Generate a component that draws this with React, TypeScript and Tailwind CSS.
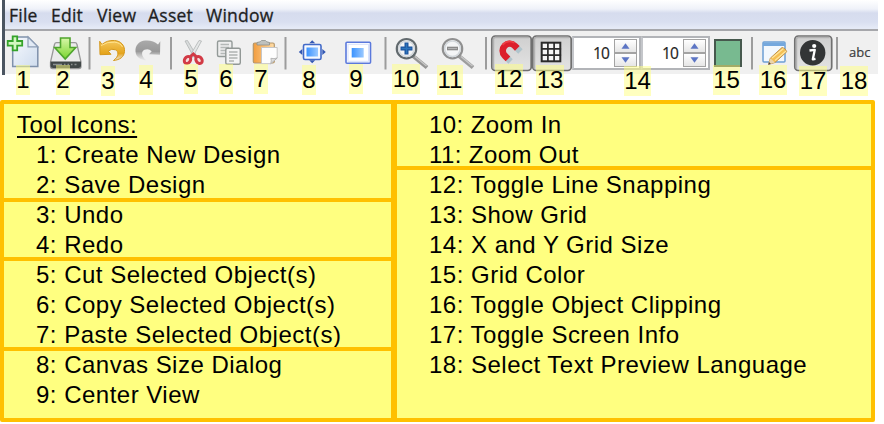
import type { ReactNode } from "react";

const menus = [
  { label: "File", cls: "w-[42px]" },
  { label: "Edit", cls: "w-[46px]" },
  { label: "View", cls: "w-[51px]" },
  { label: "Asset", cls: "w-[58px]" },
  { label: "Window", cls: "w-[80px]" },
];

/* Each tool draws in toolbar coordinates: x is its left edge, y starts at 31. */
function Tool({ x, w, children }: { x: number; w: number; children?: ReactNode }) {
  return (
    <svg className="block shrink-0" width={w} height={43} viewBox={`${x} 31 ${w} 43`}>
      {children}
    </svg>
  );
}

function Separator({ x, w }: { x: number; w: number }) {
  return (
    <Tool x={x} w={w}>
      <rect x={x + w / 2 - 1} y="37" width="2" height="32.5" fill="#9c9c9c" />
    </Tool>
  );
}

function Pressed({ x, w = 39 }: { x: number; w?: number }) {
  return (
    <>
      <rect x={x + 0.8} y="36" width={w - 1.6} height="34.5" rx="3.5" fill="url(#pressed)" stroke="#707070" strokeWidth="1.7" />
      <path d={`M${x + 2.5} 69V39.5q0-2 2-2H${x + w - 3}`} fill="none" stroke="#b2b2b2" strokeWidth="1.5" />
    </>
  );
}

function SpinButton({ up }: { up?: boolean }) {
  return (
    <div className="flex h-[14px] w-[23px] items-center justify-center border border-[#a3a3a3] bg-gradient-to-b from-white to-[#e6e6e6]">
      <svg width="9" height="6" viewBox="0 0 9 6">
        <path d={up ? "M0.5 5.7 4.5 0.3 8.5 5.7Z" : "M0.5 0.3 4.5 5.7 8.5 0.3Z"} fill="#5c75c4" />
      </svg>
    </div>
  );
}

function Spinner() {
  return (
    <div className="mt-[5px] flex h-[34px] w-[69px] shrink-0 items-start justify-end border-2 border-[#b2b4b8] border-l-[#c4c6ca] bg-white pr-[2px] pt-px">
      <span className="mr-[5px] mt-[4px] text-[15.5px] leading-[20px] tracking-[-0.9px] text-[#222] [-webkit-text-stroke:0.2px]">10</span>
      <div className="flex flex-col">
        <SpinButton up />
        <SpinButton />
      </div>
    </div>
  );
}

function Magnifier({ x, color, handle, children }: { x: number; color: string; handle: string; children: ReactNode }) {
  return (
    <g transform={`translate(${x} 0)`}>
      <path d="M18 56 32 67.5" stroke={handle} strokeWidth="4" />
      <path d="M20 56.5 31.5 66" stroke="#c8c8c8" strokeWidth="1.3" />
      <circle cx="11.5" cy="48.7" r="9.7" fill="#f4f5f6" stroke={color} strokeWidth="2.2" />
      <circle cx="11.5" cy="48.7" r="7.8" fill="none" stroke="#d3d8dc" strokeWidth="1.5" />
      {children}
    </g>
  );
}

function Toolbar() {
  return (
    <div className="flex h-[43px] bg-[#f0f0f0]">
      <Tool x={5} w={39}>
        <defs>
          <linearGradient id="pressed" x2="0" y2="1"><stop stopColor="#cfcfcf" /><stop offset="1" stopColor="#e3e3e3" /></linearGradient>
          <linearGradient id="paper" x2="1" y2="1"><stop stopColor="#f6f9fd" /><stop offset="1" stopColor="#cfdcee" /></linearGradient>
          <linearGradient id="green" x2="0" y2="1"><stop stopColor="#d8f7a8" /><stop offset="1" stopColor="#79d52d" /></linearGradient>
          <linearGradient id="gold" x2="0" y2="1"><stop stopColor="#f5c85d" /><stop offset=".65" stopColor="#e5a51d" /><stop offset="1" stopColor="#e5b75a" stopOpacity=".2" /></linearGradient>
          <linearGradient id="gray" x2="0" y2="1"><stop stopColor="#aaa" /><stop offset=".55" stopColor="#999" /><stop offset="1" stopColor="#bbb" stopOpacity=".1" /></linearGradient>
          <linearGradient id="blue" x2="1" y2="0"><stop stopColor="#3b93ff" /><stop offset="1" stopColor="#9bc9ff" /></linearGradient>
          <linearGradient id="board" x2="1" y2="0"><stop stopColor="#f29d3e" /><stop offset="1" stopColor="#ffdda8" /></linearGradient>
        </defs>
        <path d="M12.7 37H28l9.8 9.8V66.5H12.7Z" fill="url(#paper)" stroke="#7f91ab" strokeWidth="1.5" />
        <path d="M28 37v9.8h9.8Z" fill="#e2eaf5" stroke="#8c9db5" strokeWidth="1.2" />
        <path d="M12.7 36.3h4.5V41h5v4.6h-5v4.8h-4.5v-4.8h-5V41h5Z" fill="#d4f7c0" stroke="#35a32b" strokeWidth="1.8" />
      </Tool>
      <Tool x={44} w={40}>
        <path d="m54.5 44.5-4 17.5v4.5q0 2 2 2h26.5q2 0 2-2V62l-4-17.5q-.5-1.8-2-1.8H56.500q-1.500 0-2 1.800Z" fill="#ebebeb" stroke="#999" strokeWidth="1.3" />
        <path d="M50.500 61.500h30.500v4q0 2.500-2.500 2.500H53q-2.500 0-2.500-2.500Z" fill="#414747" />
        <path d="M53 64.500h9m2 0h1.500m2 0h1.500m2 0h1.500m2 0h2" stroke="#8b9090" strokeWidth="1.4" />
        <path d="M60.500 38h9.500v9.500h5.700L65.200 59 54.700 47.500h5.800Z" fill="url(#green)" stroke="#4fa52d" strokeWidth="1.6" />
      </Tool>
      <Separator x={84} w={11} />
      <Tool x={95} w={36}>
        <path d="M99.700 41.300 102 44.500Q107 40 114.500 40.500C121 41 125 45.500 124.500 51.500 124 57 120 59.800 113.500 60.500 119 56.500 119 51.500 115.500 49.800Q111.500 48 108.300 51.200L111 54.300 100 54.700Z" fill="url(#gold)" stroke="#d5981c" strokeWidth="1" />
        <path d="M101 45.500Q107.500 41.500 114.500 42.200 120 42.500 122.500 47" fill="none" stroke="#ffe28c" strokeWidth="1" />
      </Tool>
      <Tool x={131} w={35}>
        <path d="M160.300 41.300 158 44.500Q153 40 145.500 40.500C139 41 135 45.500 135.500 51.500 136 57 140 59.800 146.500 60.500 141 56.500 141 51.500 144.500 49.800Q148.500 48 151.700 51.200L149 54.300 160 54.700Z" fill="url(#gray)" />
      </Tool>
      <Separator x={166} w={10} />
      <Tool x={176} w={35}>
        <path d="m185 41 2.500-.5 9.500 16-3 1Z" fill="#d9dcdc" stroke="#b0b4b4" strokeWidth=".8" />
        <path d="m201.500 41-2.500-.5-9.500 16 3 1Z" fill="#e5e7e7" stroke="#b0b4b4" strokeWidth=".8" />
        <ellipse cx="187.500" cy="60" rx="2.900" ry="3.800" transform="rotate(35 187.500 60)" fill="#f6dede" stroke="#d23a45" strokeWidth="3" />
        <ellipse cx="199" cy="60" rx="2.900" ry="3.800" transform="rotate(-35 199 60)" fill="#f6dede" stroke="#d23a45" strokeWidth="3" />
        <path d="m190 57 3.300-3 3.300 3" fill="none" stroke="#d23a45" strokeWidth="3" />
      </Tool>
      <Tool x={211} w={35}>
        <rect x="217.500" y="41" width="14.500" height="15.500" rx="1.500" fill="#eee" stroke="#939a98" strokeWidth="1.400" />
        <path d="M220.500 44.500h8.500m-8.500 3h8.500m-8.500 3h8.500m-8.500 3h6" stroke="#b4b8b7" strokeWidth="1.300" />
        <rect x="225.800" y="48.300" width="14.500" height="16" rx="1.500" fill="#f4f4f4" stroke="#929896" strokeWidth="1.400" />
        <path d="M229 52h8.500m-8.500 3h8.500m-8.500 3h8.500m-8.500 3h5" stroke="#aeb2b1" strokeWidth="1.300" />
      </Tool>
      <Tool x={246} w={35}>
        <rect x="253.300" y="43" width="21" height="20" rx="1.500" fill="url(#board)" stroke="#b5976a" strokeWidth="1.200" />
        <path d="M257 45v-2.500q4-.5 4.500-2h4q.5 1.500 4 2V45Z" fill="#bfc1bd" stroke="#8d918c" strokeWidth=".8" />
        <path d="M261.500 47.500h15.700V58l-6.500 5.700h-9.200Z" fill="#fdfdfd" stroke="#c6c6c6" />
        <path d="M270.700 63.700q1-3 .2-5.400 3 .8 6.300-.3Z" fill="#ddd" stroke="#aaa" strokeWidth=".8" />
      </Tool>
      <Separator x={281} w={9} />
      <Tool x={290} w={46}>
        <rect x="303.500" y="44.500" width="17.500" height="15" rx="1.500" fill="#f7faff" stroke="#426ac8" strokeWidth="1.600" />
        <rect x="306.500" y="47.500" width="11.500" height="9" fill="url(#blue)" />
        <path d="m312.200 40.300 3 3h-6Zm0 23 3-3h-6Zm-13.400-11.300 3.500-3v6Zm27 0-3.500-3v6Z" fill="#3559b3" />
      </Tool>
      <Tool x={336} w={45}>
        <rect x="346" y="42.300" width="24.500" height="21" rx="1" fill="white" stroke="#5b79dc" strokeWidth="1.600" />
        <rect x="348" y="44.300" width="20.500" height="17" fill="none" stroke="#d8e2fc" />
        <rect x="351.700" y="48" width="12" height="9.500" fill="url(#blue)" />
      </Tool>
      <Separator x={381} w={9} />
      <Tool x={390} w={46}>
        <Magnifier x={395} color="#626a6e" handle="#949494">
          <path d="M11.500 42.500v12M5.500 48.500h12" stroke="#1c559e" strokeWidth="4" />
          <path d="M11.500 43.500v10M6.500 48.500h10" stroke="#2d75bd" strokeWidth="1.500" />
        </Magnifier>
      </Tool>
      <Tool x={436} w={46}>
        <Magnifier x={441} color="#909090" handle="#9d9d9d">
          <path d="M6 48.500h11" stroke="#8b8b8b" strokeWidth="3.600" />
          <path d="M7 48.500h9" stroke="#b3b3b3" strokeWidth="1" />
        </Magnifier>
      </Tool>
      <Separator x={482} w={8} />
      <Tool x={490} w={42}>
        <Pressed x={491} w={41} />
        <path d="m514.650 45.750 5.800 5.800M504.750 55.650l5.800 5.800" stroke="#b0c4cc" strokeWidth="6.200" />
        <path d="M517.300 48.400 514.650 45.750A7 7 0 0 0 504.750 55.650L508 58.900" fill="none" stroke="#dc1f2b" strokeWidth="6.600" />
        <path d="M514.500 42.800Q507.500 39 502.500 45" fill="none" stroke="#ee3f45" strokeWidth="1.600" />
      </Tool>
      <Tool x={532} w={40}>
        <Pressed x={532} w={40} />
        <rect x="541.700" y="42.700" width="18.600" height="18.600" fill="#f5f5f5" stroke="#2b2b2b" strokeWidth="2" />
        <path d="M547.900 42v20m6.200-20v20m-13-13.100h20m-20 6.200h20" stroke="#2b2b2b" strokeWidth="1.700" />
      </Tool>
      <Spinner />
      <Spinner />
      <div className="ml-1 mt-2 h-[28px] w-[28px] shrink-0 border-2 border-[#46584d] bg-[#78ba90]" />
      <Separator x={742} w={20} />
      <Tool x={762} w={31}>
        <rect x="763" y="42" width="22" height="20" rx="1" fill="#f3f8fd" stroke="#6d9fd3" strokeWidth="1.500" />
        <path d="M763 42.500h22v3.500h-22Z" fill="#75a8dd" />
        <path d="m768.500 64.500 1.800-6.300L782 47.500q3.200.3 4.800 4.200L775 62.500Z" fill="#f5bf54" stroke="#b98a42" strokeWidth=".9" />
        <path d="m772 58 11.500-9.500m-8.500 12L786 51" stroke="#ffe69d" strokeWidth="1.200" />
        <path d="m768.500 64.500 1.800-6.300 4.700 4.300Z" fill="#ebd4ab" />
        <path d="m768.300 64.700.7-2.700 1.900 1.800Z" fill="#444" />
      </Tool>
      <Tool x={793} w={40}>
        <Pressed x={794} w={38.500} />
        <circle cx="812.700" cy="52.700" r="12.700" fill="#333536" />
        <circle cx="814.200" cy="46" r="2.100" fill="white" />
        <path d="m809.500 50.500 5.300-.7-2 9.500 2.700-.5" fill="none" stroke="white" strokeWidth="2.300" strokeLinejoin="round" />
      </Tool>
      <Separator x={833} w={8} />
      <span className="ml-[8px] mt-[12px] text-[13px] leading-[18px] text-[#3d3d3d] [-webkit-text-stroke:0.2px]">abc</span>
    </div>
  );
}

const badges = [
  { n: 1, pos: "left-[16px] top-[65px] w-[14px]" },
  { n: 2, pos: "left-[56px] top-[65px] w-[14px]" },
  { n: 3, pos: "left-[101px] top-[66px] w-[14px]" },
  { n: 4, pos: "left-[139px] top-[65px] w-[14px]" },
  { n: 5, pos: "left-[184px] top-[64px] w-[14px]" },
  { n: 6, pos: "left-[219px] top-[64px] w-[14px]" },
  { n: 7, pos: "left-[254px] top-[64px] w-[14px]" },
  { n: 8, pos: "left-[302px] top-[65px] w-[14px]" },
  { n: 9, pos: "left-[349px] top-[64px] w-[14px]" },
  { n: 10, pos: "left-[392px] top-[64px] w-[28px]" },
  { n: 11, pos: "left-[437px] top-[65px] w-[26px]" },
  { n: 12, pos: "left-[495px] top-[64px] w-[28px]" },
  { n: 13, pos: "left-[536px] top-[65px] w-[28px]" },
  { n: 14, pos: "left-[624px] top-[66px] w-[27px]" },
  { n: 15, pos: "left-[713px] top-[65px] w-[27px]" },
  { n: 16, pos: "left-[759px] top-[65px] w-[28px]" },
  { n: 17, pos: "left-[799px] top-[66px] w-[28px]" },
  { n: 18, pos: "left-[840px] top-[66px] w-[28px]" },
];

function Group({ cls, items }: { cls: string; items: string[] }) {
  return (
    <div className={`shrink-0 overflow-hidden border-[#ffc000] ${cls}`}>
      {items.map((t) => (
        <div key={t} className="h-[30px] whitespace-pre">{t}</div>
      ))}
    </div>
  );
}

export default function App() {
  return (
    <div className="relative h-[424px] w-[884px] overflow-hidden bg-white font-['Liberation_Sans',Arial,sans-serif] text-black">
      <div className="ml-[2px] h-[75px] w-[876px] border-l-[3px] border-[#4b5561] font-['Open_Sans','Noto_Sans',sans-serif]">
        <nav className="flex h-[31px] border-b-2 border-[#a6a7ab] bg-[linear-gradient(#ffffff_0px,#eff2f9_9px,#d6dcee_13px,#d9dff0_22px,#e5eaf6_28px)] pl-[4px] pt-[3px] text-[17.5px] leading-[24px] tracking-[0.25px] text-[#1e1e22] [-webkit-text-stroke:0.3px]">
          {menus.map((m) => (
            <span key={m.label} className={`shrink-0 ${m.cls}`}>{m.label}</span>
          ))}
        </nav>
        <Toolbar />
      </div>
      {badges.map((b) => (
        <div key={b.n} className={`absolute flex h-[30px] justify-center bg-[#ffff80]/50 text-[24px] leading-[30px] ${b.pos}`}>
          {b.n}
        </div>
      ))}
      <div className="mt-[25px] flex h-[322px] w-[875px] rounded-[2px] border-4 border-[#ffc000] bg-[#ffff80] text-[24px] leading-[30px] tracking-[0.49px]">
        <div className="flex w-[387px] shrink-0 flex-col">
          <div className="h-[98px] border-b-4 border-[#ffc000] pt-[6px]">
            <div className="ml-[13px] h-[30px] underline decoration-2 underline-offset-[3px]">Tool Icons:</div>
            <div className="h-[30px] pl-[32px]">1: Create New Design</div>
            <div className="h-[30px] pl-[32px]">2: Save Design</div>
          </div>
          <Group cls="h-[59px] border-b-4 pl-[32px] [&>div:first-child]:-mt-[2px]" items={["3: Undo", "4: Redo"]} />
          <Group cls="h-[90px] border-b-4 pl-[32px] [&>div:first-child]:-mt-[1px]" items={["5: Cut Selected Object(s)", "6: Copy Selected Object(s)", "7: Paste Selected Object(s)"]} />
          <Group cls="h-[67px] pl-[32px] [&>div:first-child]:-mt-[1px]" items={["8: Canvas Size Dialog", "9: Center View"]} />
        </div>
        <div className="flex flex-1 flex-col border-l-[6px] border-[#ffc000]">
          <Group cls="h-[66px] border-b-4 pl-[32px] pt-[6px] tracking-[0.4px]" items={["10: Zoom In", "11: Zoom Out"]} />
          <Group
            cls="h-[248px] pl-[32px]"
            items={["12: Toggle Line Snapping", "13: Show Grid", "14: X and Y Grid Size", "15: Grid Color", "16: Toggle Object Clipping", "17: Toggle Screen Info", "18: Select Text Preview Language"]}
          />
        </div>
      </div>
    </div>
  );
}
